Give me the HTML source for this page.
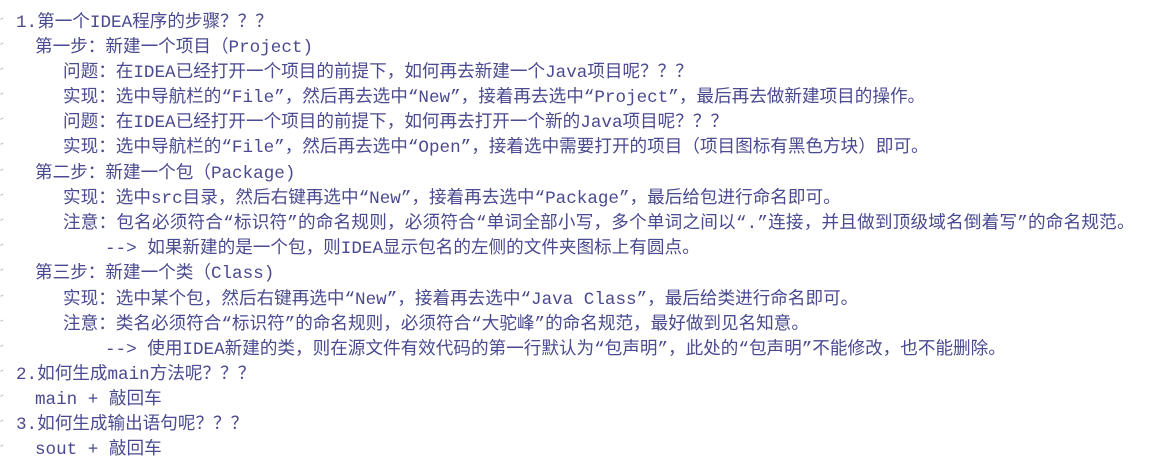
<!DOCTYPE html>
<html><head><meta charset="utf-8"><style>
html,body{margin:0;padding:0;background:#fff;width:1163px;height:457px;overflow:hidden}
body{font-family:"Liberation Mono","Noto Sans CJK SC",monospace;font-size:17.6px;color:#4a4a90}
.l{position:absolute;white-space:pre;height:25px;line-height:25px}
.t{position:absolute;left:1px;width:3px;height:3px;border-top:1px solid #bbb;transform:rotate(-30deg)}
</style></head><body>
<div class="l" style="top:11px;left:16px">1.第一个IDEA程序的步骤？？？</div>
<div class="l" style="top:36px;left:35px">第一步：新建一个项目（Project)</div>
<div class="l" style="top:61px;left:63px">问题：在IDEA已经打开一个项目的前提下，如何再去新建一个Java项目呢？？？</div>
<div class="l" style="top:86px;left:63px">实现：选中导航栏的“File”，然后再去选中“New”，接着再去选中“Project”，最后再去做新建项目的操作。</div>
<div class="l" style="top:111px;left:63px">问题：在IDEA已经打开一个项目的前提下，如何再去打开一个新的Java项目呢？？？</div>
<div class="l" style="top:136px;left:63px">实现：选中导航栏的“File”，然后再去选中“Open”，接着选中需要打开的项目（项目图标有黑色方块）即可。</div>
<div class="l" style="top:162px;left:35px">第二步：新建一个包（Package)</div>
<div class="l" style="top:187px;left:63px">实现：选中src目录，然后右键再选中“New”，接着再去选中“Package”，最后给包进行命名即可。</div>
<div class="l" style="top:212px;left:63px;letter-spacing:0.2px">注意：包名必须符合“标识符”的命名规则，必须符合“单词全部小写，多个单词之间以“.”连接，并且做到顶级域名倒着写”的命名规范。</div>
<div class="l" style="top:237px;left:105px">--> 如果新建的是一个包，则IDEA显示包名的左侧的文件夹图标上有圆点。</div>
<div class="l" style="top:262px;left:35px">第三步：新建一个类（Class)</div>
<div class="l" style="top:288px;left:63px">实现：选中某个包，然后右键再选中“New”，接着再去选中“Java Class”，最后给类进行命名即可。</div>
<div class="l" style="top:313px;left:63px">注意：类名必须符合“标识符”的命名规则，必须符合“大驼峰”的命名规范，最好做到见名知意。</div>
<div class="l" style="top:338px;left:105px">--> 使用IDEA新建的类，则在源文件有效代码的第一行默认为“包声明”，此处的“包声明”不能修改，也不能删除。</div>
<div class="l" style="top:363px;left:16px">2.如何生成main方法呢？？？</div>
<div class="l" style="top:388px;left:35px">main + 敲回车</div>
<div class="l" style="top:413px;left:16px">3.如何生成输出语句呢？？？</div>
<div class="l" style="top:438px;left:35px">sout + 敲回车</div>
<div class="t" style="top:18px"></div><div class="t" style="top:43px"></div><div class="t" style="top:68px"></div>
<div class="t" style="top:93px"></div><div class="t" style="top:118px"></div><div class="t" style="top:143px"></div>
<div class="t" style="top:169px"></div><div class="t" style="top:194px"></div><div class="t" style="top:219px"></div>
<div class="t" style="top:244px"></div><div class="t" style="top:269px"></div><div class="t" style="top:295px"></div>
<div class="t" style="top:320px"></div><div class="t" style="top:345px"></div><div class="t" style="top:370px"></div>
<div class="t" style="top:395px"></div><div class="t" style="top:420px"></div><div class="t" style="top:445px"></div>
</body></html>
